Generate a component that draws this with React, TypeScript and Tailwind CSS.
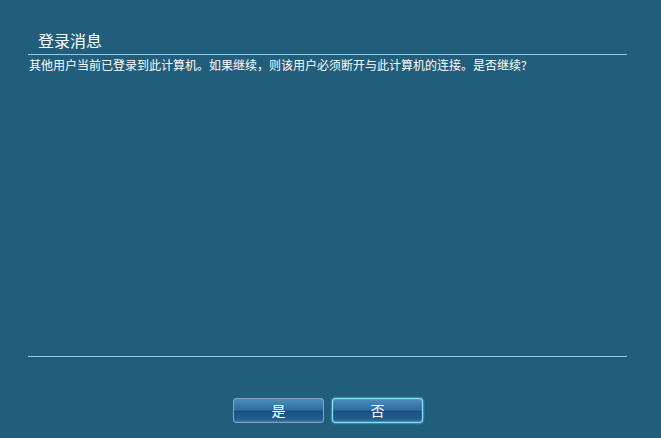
import React from 'react';

const font = { fontFamily: '"Microsoft YaHei", "Noto Sans CJK SC", "Liberation Sans", sans-serif' };

function DialogButton({ label, focused }: { label: string; focused?: boolean }) {
  return (
    <button
      className={
        focused
          ? 'flex h-[25px] w-[91px] items-center justify-center rounded-[3px] border border-[#7fe6f5] bg-[linear-gradient(to_bottom,#4f8cbb_0%,#306fa3_45%,#1b4f84_55%,#23608f_90%,#3d82ad_100%)] text-[14px] text-white shadow-[0_0_2px_#8ff0ff,inset_0_0_1px_#d8f8ff]'
          : 'flex h-[25px] w-[91px] items-center justify-center rounded-[3px] border border-[#8aa3b6] bg-[linear-gradient(to_bottom,#4f8cbb_0%,#306fa3_45%,#1b4f84_55%,#23608f_90%,#3d82ad_100%)] text-[14px] text-white'
      }
      style={font}
    >
      {label}
    </button>
  );
}

export default function App() {
  return (
    <div className="flex h-[438px] w-[661px] flex-col bg-[#215e7b] text-white" style={font}>
      <div className="pl-[38px] pt-[29px] text-[16px] leading-[22px]">登录消息</div>
      <div className="ml-[28px] mr-[34px] mt-[3px] h-px bg-[#8ccbe8]" />
      <div className="pl-[29px] pt-[3px] text-[12px] leading-[14px]">
        其他用户当前已登录到此计算机。如果继续，则该用户必须断开与此计算机的连接。是否继续?
      </div>
      <div className="flex-1" />
      <div className="ml-[28px] mr-[34px] h-px bg-[#8ccbe8]" />
      <div className="flex gap-[8px] pb-[15px] pl-[233px] pt-[41px]">
        <DialogButton label="是" />
        <DialogButton label="否" focused />
      </div>
    </div>
  );
}
